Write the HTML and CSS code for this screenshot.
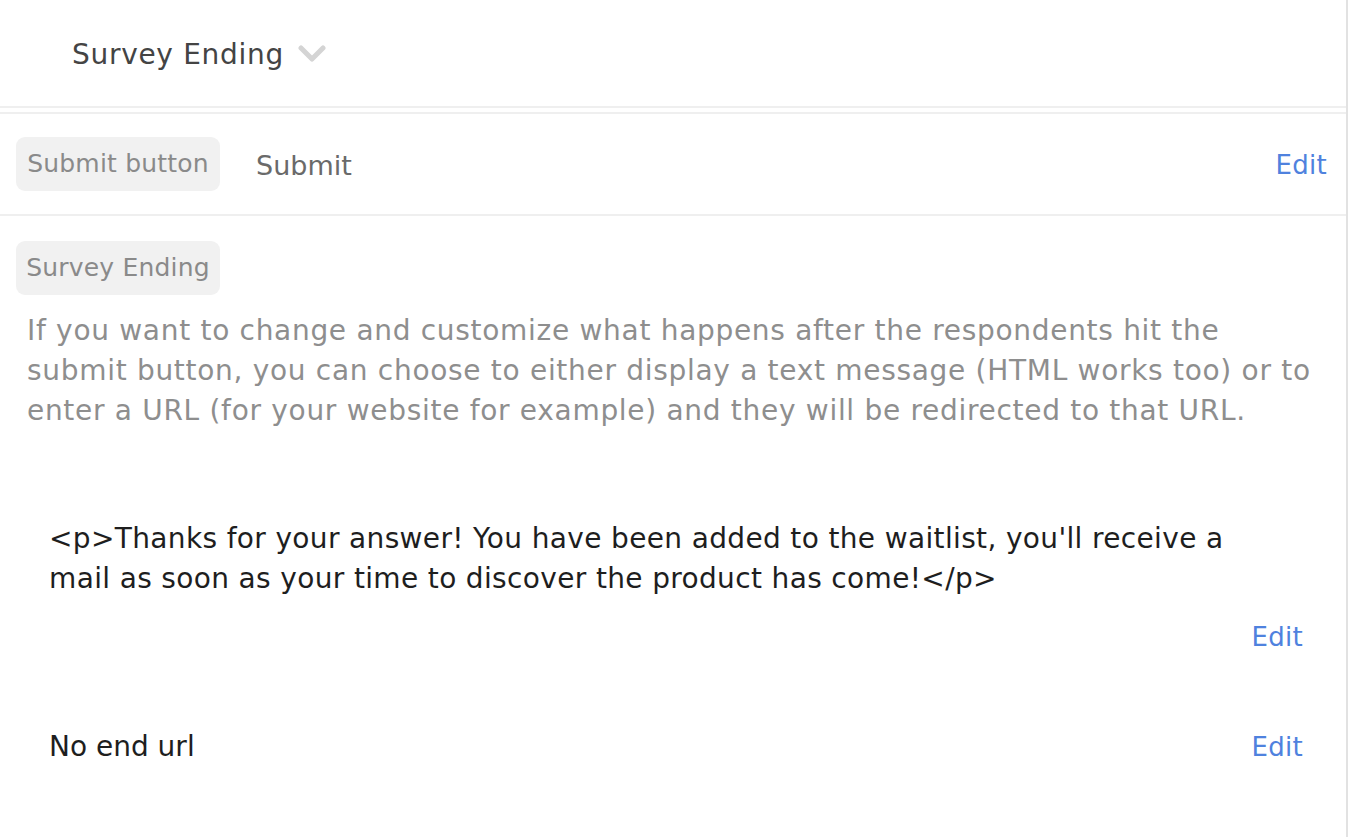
FILE: index.html
```html
<!DOCTYPE html>
<html>
<head>
<meta charset="utf-8">
<link rel="stylesheet" href="styles.css">
</head>
<body>
<div class="panel">
  <header class="header">
    <span class="title">Survey Ending</span>
    <svg class="chev" width="28" height="18" viewBox="0 0 28 18"><path d="M3 3 L14 14 L25 3" fill="none" stroke="#d4d4d4" stroke-width="5" stroke-linecap="round" stroke-linejoin="round"/></svg>
  </header>
  <div class="row submit-row">
    <span class="chip">Submit button</span>
    <span class="submit-val">Submit</span>
    <a class="edit edit-top">Edit</a>
  </div>
  <section class="ending">
    <span class="chip">Survey Ending</span>
    <p class="desc">If you want to change and customize what happens after the respondents hit the submit button, you can choose to either display a text message (HTML works too) or to enter a URL (for your website for example) and they will be redirected to that URL.</p>
    <div class="msg">
      <p class="msg-text">&lt;p&gt;Thanks for your answer! You have been added to the waitlist, you'll receive a mail as soon as your time to discover the product has come!&lt;/p&gt;</p>
      <div class="msg-edit"><a class="edit">Edit</a></div>
    </div>
    <div class="url-row">
      <span class="url-text">No end url</span>
      <a class="edit">Edit</a>
    </div>
  </section>
</div>
</body>
</html>
```
FILE: styles.css
```css
html, body {
  margin: 0;
  padding: 0;
  background: #fff;
}
body {
  font-family: "DejaVu Sans", "Noto Sans", sans-serif;
  width: 1350px;
  height: 837px;
  overflow: hidden;
}
.panel {
  width: 1346px;
  height: 837px;
  border-right: 2px solid #e2e2e2;
}
.header {
  display: flex;
  align-items: center;
  padding-left: 72px;
  gap: 14px;
  border-bottom: 2px solid #efefef;
  box-sizing: border-box;
  height: 108px;
}
.title {
  font-size: 28px;
  letter-spacing: 0.7px;
  color: #444;
  margin-top: 2px;
}
.chev {
  margin-top: 2px;
}
.submit-row {
  margin-top: 4px;
  border-top: 2px solid #efefef;
  border-bottom: 2px solid #efefef;
  height: 104px;
  box-sizing: border-box;
  display: flex;
  align-items: center;
  padding: 0 19px 0 16px;
}
.chip {
  display: inline-block;
  background: #f1f1f1;
  color: #8a8a8a;
  font-size: 25px;
  letter-spacing: 0.2px;
  height: 54px;
  line-height: 54px;
  width: 204px;
  text-align: center;
  border-radius: 9px;
  box-sizing: border-box;
  white-space: nowrap;
}
.submit-val {
  margin-left: 36px;
  margin-top: 2px;
  font-size: 27px;
  color: #6a6a6a;
  flex: 1;
}
.edit-top {
  margin-top: 2px;
}
.edit {
  color: #4f82de;
  font-size: 26px;
  letter-spacing: 0.3px;
}
.ending {
  padding: 25px 16px 0 16px;
}
.desc {
  margin: 16px 0 0 11px;
  max-width: 1290px;
  font-size: 28px;
  letter-spacing: 0.7px;
  line-height: 40px;
  color: #8e8e8e;
}
.msg {
  margin: 88px 27px 0 33px;
}
.msg-text {
  margin: 0;
  max-width: 1200px;
  font-size: 28px;
  letter-spacing: 0.35px;
  line-height: 40px;
  color: #1e1e1e;
}
.msg-edit {
  display: flex;
  justify-content: flex-end;
  margin-top: 23px;
}
.url-row {
  margin: 78px 27px 0 33px;
  display: flex;
  justify-content: space-between;
  align-items: center;
}
.url-text {
  font-size: 28px;
  color: #1e1e1e;
}
```
